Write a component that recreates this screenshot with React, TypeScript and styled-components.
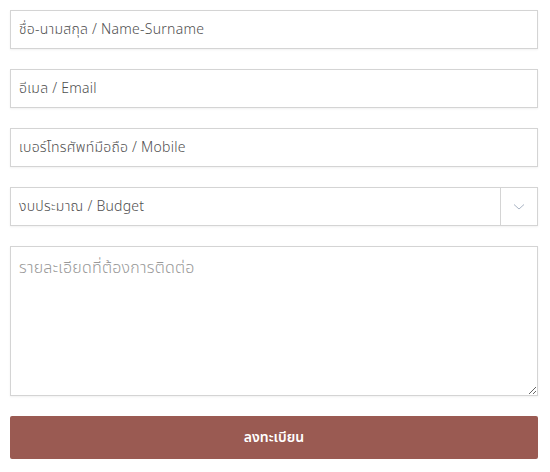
import React from "react";
import styled, { createGlobalStyle } from "styled-components";

const FONT = `"Noto Sans Thai", "Noto Sans Thai UI", "Noto Sans", "DejaVu Sans", sans-serif`;

const Global = createGlobalStyle`
  html, body { margin: 0; padding: 0; background: #fff; }
  body { font-family: ${FONT}; }
  * { box-sizing: border-box; }
`;

const Form = styled.form`
  display: flex;
  flex-direction: column;
  gap: 20px;
  padding: 10px 12px 10px 10px;
  width: 550px;
`;

const fieldBase = `
  width: 100%;
  border: 1px solid #d4d4d4;
  border-radius: 0;
  background: #fff;
  box-shadow: 0 1px 2px rgba(0,0,0,0.06);
  font-family: ${FONT};
  font-weight: 300;
  letter-spacing: 0.25px;
  color: #4f4f4f;
  outline: none;
`;

const Input = styled.input`
  ${fieldBase}
  height: 39px;
  padding: 0 8px;
  font-size: 14px;
  &::placeholder { color: #4f4f4f; opacity: 1; }
`;

const SelectBox = styled.div`
  ${fieldBase}
  height: 39px;
  display: flex;
  align-items: stretch;
`;

const SelectLabel = styled.div`
  flex: 1;
  display: flex;
  align-items: center;
  padding: 0 8px;
  font-size: 14px;
`;

const SelectArrow = styled.div`
  width: 37px;
  border-left: 1px solid #d4d4d4;
  display: flex;
  align-items: center;
  justify-content: center;
`;

const TextArea = styled.textarea`
  ${fieldBase}
  height: 150px;
  padding: 9px 8px;
  font-size: 16px;
  resize: vertical;
  &::placeholder { color: #999; opacity: 1; }
`;

const Submit = styled.button`
  height: 43px;
  width: 100%;
  border: none;
  border-radius: 2px;
  background: #9a5a52;
  color: #fff;
  font-family: ${FONT};
  font-size: 14px;
  font-weight: 600;
  padding-bottom: 2px;
`;

export default function App() {
  return (
    <>
      <Global />
      <Form onSubmit={(e) => e.preventDefault()}>
        <Input placeholder="ชื่อ-นามสกุล / Name-Surname" />
        <Input placeholder="อีเมล / Email" />
        <Input placeholder="เบอร์โทรศัพท์มือถือ / Mobile" />
        <SelectBox>
          <SelectLabel>งบประมาณ / Budget</SelectLabel>
          <SelectArrow>
            <svg width="12" height="8" viewBox="0 0 12 8" fill="none">
              <path d="M1 1.5 L6 6 L11 1.5" stroke="#a9b4c4" strokeWidth="1" />
            </svg>
          </SelectArrow>
        </SelectBox>
        <TextArea placeholder="รายละเอียดที่ต้องการติดต่อ" />
        <Submit type="submit">ลงทะเบียน</Submit>
      </Form>
    </>
  );
}
